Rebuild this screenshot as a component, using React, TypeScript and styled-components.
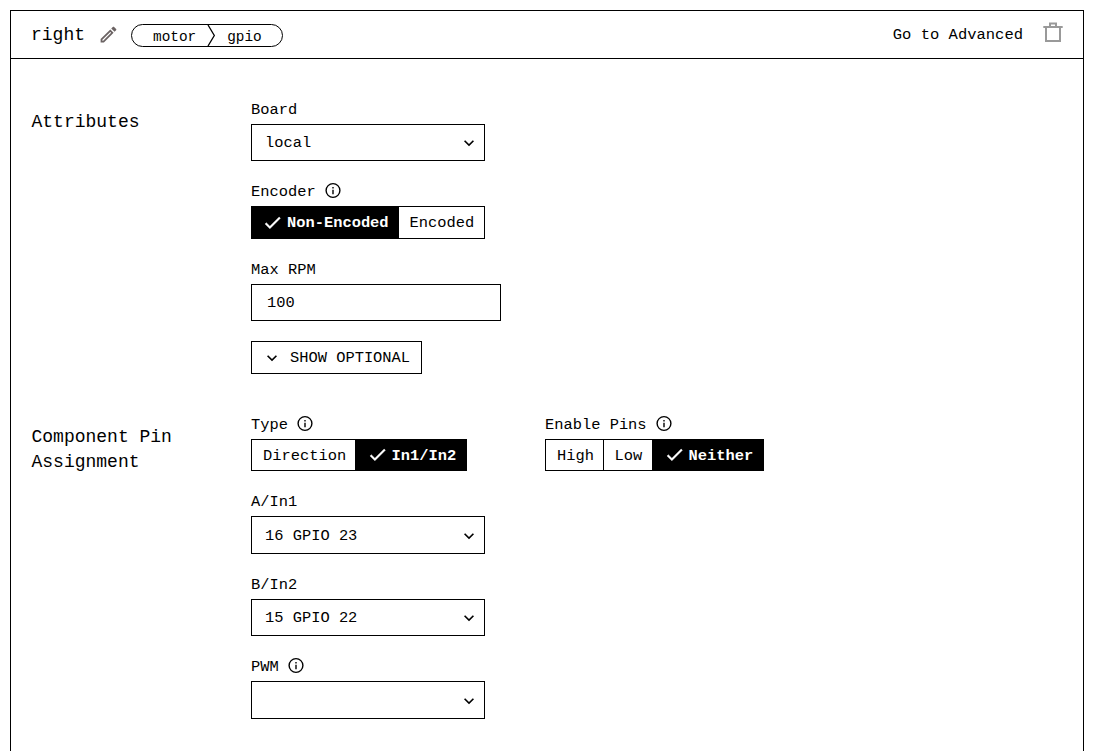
import React from "react";
import styled, { createGlobalStyle } from "styled-components";

const GlobalStyle = createGlobalStyle`
  * { box-sizing: border-box; }
  html, body { margin: 0; background: #fff; overflow: hidden; }
  body {
    font-family: "Liberation Mono", monospace;
    font-size: 15.4px;
    color: #000;
  }
  button, input { font: inherit; color: inherit; }
  svg { display: block; flex: none; }
`;

const Card = styled.main`
  margin: 10px 13px 0 10px;
  height: 741px;
  border: 1px solid #000;
  border-bottom: 0;
  overflow: hidden;
`;

const Header = styled.header`
  display: flex;
  align-items: center;
  height: 48px;
  padding: 0 18px 0 20px;
  border-bottom: 1px solid #000;
`;

const Name = styled.h1`
  margin: 0;
  width: 67px;
  font-size: 18px;
  line-height: 24px;
  font-weight: 400;
`;

const Breadcrumb = styled.div`
  display: flex;
  align-items: center;
  width: 152px;
  height: 23px;
  margin: 2px 0 0 12px;
  padding-left: 21px;
  border: 1px solid #000;
  border-radius: 12px;
  font-size: 14.4px;
  line-height: 20px;
  span { padding-top: 2px; }
`;

const Divider = styled.svg`
  margin: 0 11px 0 11px;
`;

const AdvancedLink = styled.button`
  margin-left: auto;
  padding: 0;
  border: 0;
  background: none;
  font-size: 15.5px;
  line-height: 20px;
`;

const TrashIcon = styled.svg`
  margin: -3px 0 0 18px;
`;

const Section = styled.section<{ $top: number }>`
  display: grid;
  grid-template-columns: 220px 1fr;
  padding: ${(p) => p.$top}px 20px 0;
`;

const SectionTitle = styled.h2`
  margin: 10px 0 0;
  width: 160px;
  padding-left: 0.5px;
  font-size: 18px;
  line-height: 25px;
  font-weight: 400;
`;

const Fields = styled.div`
  display: flex;
  flex-direction: column;
  align-items: flex-start;
  gap: 21px;
`;

const FieldRow = styled.div`
  display: flex;
  gap: 78px;
`;

const FieldBox = styled.div`
  display: flex;
  flex-direction: column;
  align-items: flex-start;
  gap: 4px;
`;

const Label = styled.label`
  display: flex;
  align-items: center;
  gap: 8px;
  height: 20px;
  line-height: 20px;
  svg { margin-top: -3px; }
`;

const SelectBox = styled.div<{ $height: number }>`
  display: flex;
  align-items: center;
  justify-content: space-between;
  width: 234px;
  height: ${(p) => p.$height}px;
  padding: ${(p) => p.$height - 37}px 5px 0 13px;
  border: 1px solid #000;
`;

const TextInput = styled.input`
  width: 250px;
  height: 37px;
  padding: 0 15px;
  border: 1px solid #000;
  border-radius: 0;
  outline: 0;
  background: #fff;
`;

const OptionalButton = styled.button`
  display: flex;
  align-items: center;
  gap: 8px;
  width: 171px;
  height: 33px;
  margin-top: -1px;
  padding: 0 0 0 10px;
  border: 1px solid #000;
  background: #fff;
  white-space: nowrap;
`;

const Segments = styled.div<{ $height: number }>`
  display: flex;
  height: ${(p) => p.$height}px;
  border: 1px solid #000;
`;

const Segment = styled.button<{ $active?: boolean; $width: number }>`
  display: flex;
  align-items: center;
  gap: 4px;
  width: ${(p) => p.$width}px;
  padding: 1px 0 0 ${(p) => (p.$active ? 10 : 11)}px;
  border: 0;
  background: ${(p) => (p.$active ? "#000" : "#fff")};
  color: ${(p) => (p.$active ? "#fff" : "#000")};
  font-weight: ${(p) => (p.$active ? 700 : 400)};
  white-space: nowrap;
  & + & { border-left: 1px solid #000; padding-left: ${(p) => (p.$active ? 10 : 10.5)}px; }
`;

const Pencil = () => (
  <svg width="21" height="21" viewBox="0 0 24 24" fill="#6b6363">
    <path d="M14.06,9L15,9.94L5.92,19H5V18.08L14.06,9M17.66,3C17.41,3 17.15,3.1 16.96,3.29L15.13,5.12L18.88,8.87L20.71,7.04C21.1,6.65 21.1,6 20.71,5.63L18.37,3.29C18.17,3.09 17.92,3 17.66,3M14.06,6.19L3,17.25V21H6.75L17.81,9.94L14.06,6.19Z" />
  </svg>
);

const Check = () => (
  <svg width="21" height="21" viewBox="0 0 24 24" fill="currentColor" stroke="currentColor" strokeWidth="0.5">
    <path d="M21,6L9,18L3.5,12.5L4.91,11.09L9,15.17L19.59,4.59L21,6Z" />
  </svg>
);

const Chevron = () => (
  <svg width="20" height="20" viewBox="0 0 24 24" fill="#000">
    <path d="M7.41,8.58L12,13.17L16.59,8.58L18,10L12,16L6,10L7.41,8.58Z" />
  </svg>
);

const Info = () => (
  <svg width="18" height="18" viewBox="0 0 18 18" fill="none" stroke="#000">
    <circle cx="9" cy="8.5" r="6.9" strokeWidth="1.4" />
    <path d="M9 5V6.4M9 7.8V12.2" strokeWidth="1.4" />
  </svg>
);

type FieldProps = { label: string; info?: boolean; children: React.ReactNode };

const Field = ({ label, info, children }: FieldProps) => (
  <FieldBox>
    <Label>
      {label}
      {info && <Info />}
    </Label>
    {children}
  </FieldBox>
);

const Select = ({ value, height = 37 }: { value: string; height?: number }) => (
  <SelectBox $height={height}>
    <span>{value}</span>
    <Chevron />
  </SelectBox>
);

type Option = { text: string; width: number; active?: boolean };

const Toggle = ({ options, height = 32 }: { options: Option[]; height?: number }) => (
  <Segments $height={height}>
    {options.map((o) => (
      <Segment key={o.text} $width={o.width} $active={o.active}>
        {o.active && <Check />}
        {o.text}
      </Segment>
    ))}
  </Segments>
);

export default function App() {
  return (
    <>
      <GlobalStyle />
      <Card>
        <Header>
          <Name>right</Name>
          <Pencil />
          <Breadcrumb>
            <span>motor</span>
            <Divider width="9" height="21" viewBox="0 0 9 21" fill="none" stroke="#000" strokeWidth="1.3">
              <path d="M1 0L7.3 10.5L1 21" />
            </Divider>
            <span>gpio</span>
          </Breadcrumb>
          <AdvancedLink>Go to Advanced</AdvancedLink>
          <TrashIcon width="24" height="24" viewBox="0 0 24 24" fill="none" stroke="#999" strokeWidth="2">
            <path d="M2.3 6H21.7M9 5.5V2.4H15V5.5M5 6V20H19V6" />
          </TrashIcon>
        </Header>

        <Section $top={41}>
          <SectionTitle>Attributes</SectionTitle>
          <Fields>
            <Field label="Board">
              <Select value="local" />
            </Field>
            <Field label="Encoder" info>
              <Toggle
                height={33}
                options={[
                  { text: "Non-Encoded", width: 146, active: true },
                  { text: "Encoded", width: 86 },
                ]}
              />
            </Field>
            <Field label="Max RPM">
              <TextInput defaultValue="100" />
            </Field>
            <OptionalButton>
              <Chevron />
              SHOW OPTIONAL
            </OptionalButton>
          </Fields>
        </Section>

        <Section $top={41}>
          <SectionTitle>Component Pin Assignment</SectionTitle>
          <Fields>
            <FieldRow>
              <Field label="Type" info>
                <Toggle
                  options={[
                    { text: "Direction", width: 103 },
                    { text: "In1/In2", width: 111, active: true },
                  ]}
                />
              </Field>
              <Field label="Enable Pins" info>
                <Toggle
                  options={[
                    { text: "High", width: 57 },
                    { text: "Low", width: 49 },
                    { text: "Neither", width: 111, active: true },
                  ]}
                />
              </Field>
            </FieldRow>
            <Field label="A/In1">
              <Select value="16 GPIO 23" height={38} />
            </Field>
            <Field label="B/In2">
              <Select value="15 GPIO 22" />
            </Field>
            <Field label="PWM" info>
              <Select value="" height={38} />
            </Field>
          </Fields>
        </Section>
      </Card>
    </>
  );
}
